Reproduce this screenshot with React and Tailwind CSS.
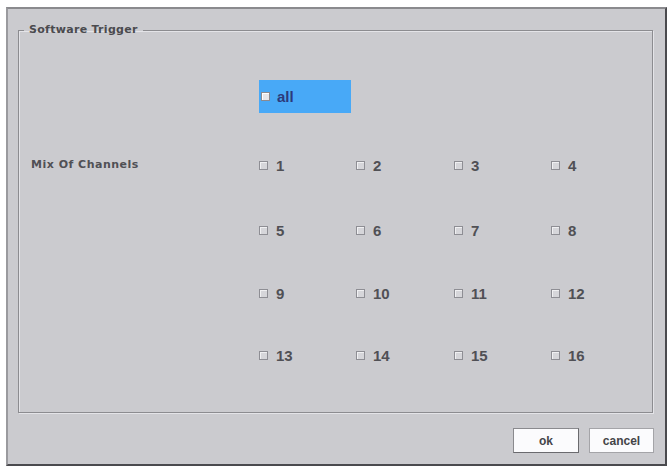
import React from "react";

const ROWS = [
  { label: "Mix Of Channels", nums: [1, 2, 3, 4], cls: "h-[20px] mt-[42px]" },
  { label: "", nums: [5, 6, 7, 8], cls: "h-[20px] mt-[45px]" },
  { label: "", nums: [9, 10, 11, 12], cls: "h-[20px] mt-[43px]" },
  { label: "", nums: [13, 14, 15, 16], cls: "h-[20px] mt-[42px]" },
];

function Box({ light }) {
  return (
    <span
      className={
        light
          ? "inline-block w-[9px] h-[9px] border border-[#8a8a90] bg-[#e6e6ea] shadow-[inset_1px_1px_0_#ffffff]"
          : "inline-block w-[9px] h-[9px] border border-[#8e8e94] bg-[#d6d6da] shadow-[inset_1px_1px_0_#f0f0f2]"
      }
    />
  );
}

function Channel({ n }) {
  return (
    <div className="flex items-center gap-[8px]">
      <Box />
      <span className="text-[15px] font-bold leading-none text-[#505055]">{n}</span>
    </div>
  );
}

export default function App() {
  return (
    <div
      className="w-[670px] h-[471px] bg-white pt-[7px] pl-[6px]"
      style={{ fontFamily: '"Liberation Sans", Arial, sans-serif' }}
    >
      <div className="w-[661px] h-[459px] bg-[#cbcbcf] border-2 border-t-[#8a8a8e] border-l-[#9a9a9e] border-r-[#4a4a4e] border-b-[#4a4a4e] flex flex-col">
        {/* group box */}
        <fieldset className="ml-[10px] mt-[14px] w-[635px] h-[390px] border border-[#8c8c90] shadow-[1px_1px_0_#e4e4e8,inset_1px_1px_0_#e4e4e8]">
          <legend className="ml-[5px] px-[5px] font-['DejaVu_Sans',sans-serif] text-[11px] tracking-[0.3px] leading-[14px] font-bold text-[#4a4a4e]">
            Software Trigger
          </legend>

          <div className="grid grid-cols-[240px_97px_98px_97px_auto] mt-[43px]">
            <div />
            <div className="col-span-4">
              <div className="w-[92px] h-[33px] bg-[#48a9f7] flex items-center pl-[2px] gap-[7px]">
                <Box light />
                <span className="text-[15px] font-bold leading-none text-[#2c3a7c]">all</span>
              </div>
            </div>
          </div>

          {ROWS.map((r, i) => (
            <div key={i} className={"grid grid-cols-[240px_97px_98px_97px_auto] items-center " + r.cls}>
              <div className="pl-[12px] font-['DejaVu_Sans',sans-serif] text-[11px] font-bold tracking-[0.5px] text-[#505055]">
                {r.label}
              </div>
              {r.nums.map((n) => (
                <Channel key={n} n={n} />
              ))}
            </div>
          ))}
        </fieldset>

        {/* buttons */}
        <div className="flex justify-end gap-[10px] mt-[15px] mr-[11px]">
          <button className="w-[66px] h-[25px] bg-[#fbfbfd] border border-[#8a8a8e] border-r-[#6a6a6e] border-b-[#6a6a6e] text-[12px] font-bold text-[#444448]">
            ok
          </button>
          <button className="w-[65px] h-[25px] bg-[#fbfbfd] border border-[#a4a4a8] text-[12px] font-bold text-[#444448]">
            cancel
          </button>
        </div>
      </div>
    </div>
  );
}
